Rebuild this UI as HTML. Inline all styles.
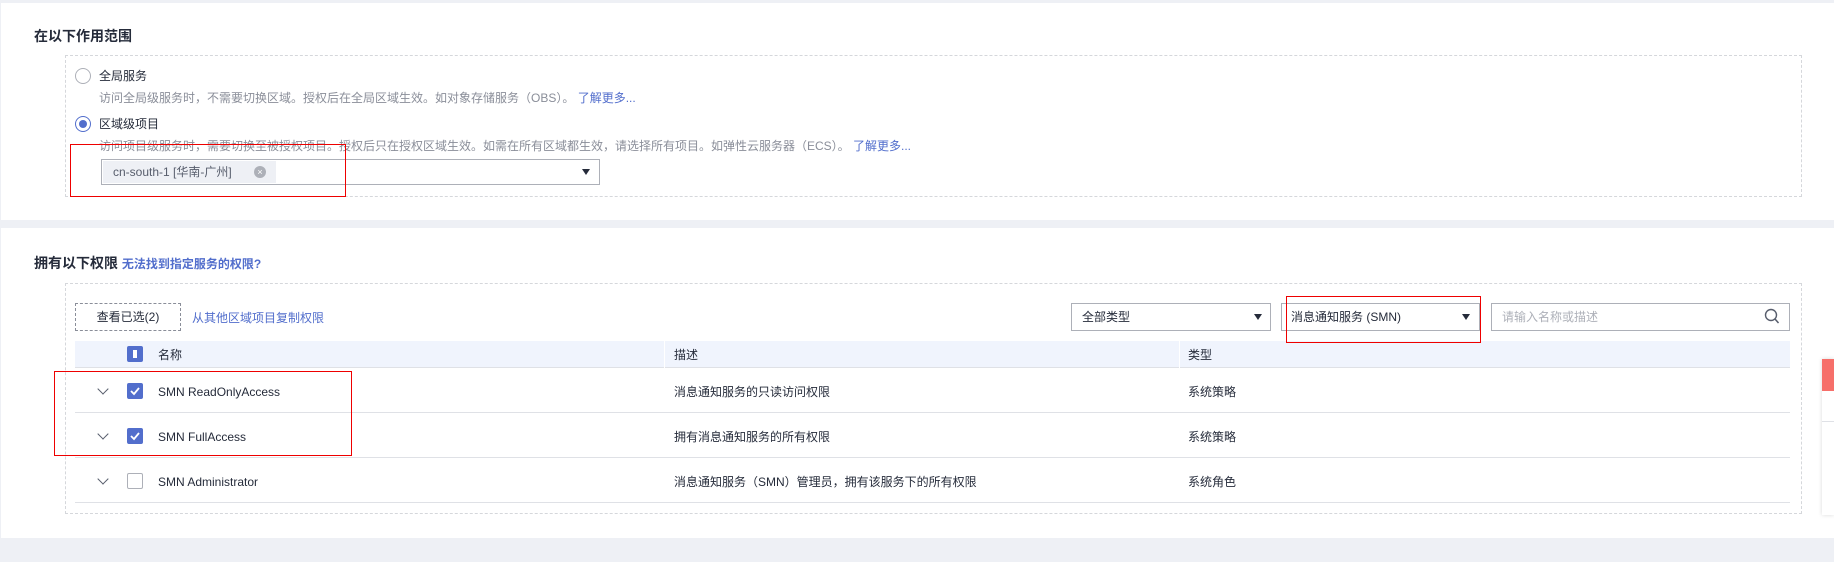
<!DOCTYPE html>
<html><head><meta charset="utf-8"><style>
*{box-sizing:border-box;margin:0;padding:0}
body{width:1834px;height:562px;background:#eef0f5;position:relative;overflow:hidden;font-family:"Liberation Sans","Noto Sans CJK SC",sans-serif;font-size:12px;color:#252b3a}
.a{position:absolute}
.card{position:absolute;left:1px;right:0;background:#fff}
.dash{position:absolute;border:1px dashed #d5d7db}
.t{position:absolute;white-space:nowrap;line-height:16px}
.radio{position:absolute;width:16px;height:16px;border:1px solid #adb0b8;border-radius:50%;background:#fff}
.sel{position:absolute;border:1px solid #adb0b8;background:#fff}
.tri{position:absolute;width:0;height:0;border-left:4px solid transparent;border-right:4px solid transparent;border-top:6px solid #252b3a}
.red{position:absolute;border:1px solid #e00;z-index:10}
.cb{position:absolute;width:16px;height:16px;border-radius:2px}
.row{position:absolute;left:75px;width:1715px;height:45px;border-bottom:1px solid #dfe1e6}
.chev{position:absolute;width:8px;height:8px;border-right:1.5px solid #575d6c;border-bottom:1.5px solid #575d6c;transform:rotate(45deg)}
</style></head><body>
<div class="card" style="top:3px;height:217px"></div>
<div class="t" style="left:34px;top:28px;font-size:14px;font-weight:bold">在以下作用范围</div>
<div class="dash" style="left:65px;top:55px;width:1737px;height:142px"></div>
<div class="radio" style="left:75px;top:68px"></div>
<div class="t" style="left:99px;top:68px">全局服务</div>
<div class="t" style="left:99px;top:90px;color:#8a8e99">访问全局级服务时，不需要切换区域。授权后在全局区域生效。如对象存储服务（OBS）。 <span style="color:#526ecc">了解更多...</span></div>
<div class="radio" style="left:75px;top:116px;border-color:#526ecc"><div class="a" style="left:3px;top:3px;width:8px;height:8px;border-radius:50%;background:#526ecc"></div></div>
<div class="t" style="left:99px;top:116px">区域级项目</div>
<div class="t" style="left:99px;top:138px;color:#8a8e99">访问项目级服务时，需要切换至被授权项目。授权后只在授权区域生效。如需在所有区域都生效，请选择所有项目。如弹性云服务器（ECS）。 <span style="color:#526ecc">了解更多...</span></div>
<div class="sel" style="left:101px;top:159px;width:499px;height:26px"></div>
<div class="a" style="left:103px;top:161px;width:173px;height:22px;background:#eef0f5"></div>
<div class="t" style="left:113px;top:164px;color:#575d6c">cn-south-1 [华南-广州]</div>
<div class="a" style="left:254px;top:166px;width:12px;height:12px;border-radius:50%;background:#adb0b8;color:#fff;font-size:9px;line-height:12px;text-align:center">×</div>
<div class="tri" style="left:582px;top:169px"></div>
<div class="red" style="left:70px;top:144px;width:276px;height:53px"></div>

<div class="card" style="top:228px;height:310px"></div>
<div class="t" style="left:34px;top:255px;font-size:14px;font-weight:bold">拥有以下权限 <span style="color:#526ecc;font-size:12px">无法找到指定服务的权限?</span></div>
<div class="dash" style="left:65px;top:283px;width:1737px;height:231px"></div>
<div class="a" style="left:75px;top:303px;width:106px;height:28px;border:1px dashed #8a8e99;text-align:center;line-height:26px">查看已选(2)</div>
<div class="t" style="left:192px;top:310px;color:#526ecc">从其他区域项目复制权限</div>
<div class="sel" style="left:1071px;top:303px;width:200px;height:28px"></div>
<div class="t" style="left:1082px;top:309px">全部类型</div>
<div class="tri" style="left:1254px;top:314px"></div>
<div class="sel" style="left:1281px;top:303px;width:199px;height:28px"></div>
<div class="t" style="left:1291px;top:309px">消息通知服务 (SMN)</div>
<div class="tri" style="left:1462px;top:314px"></div>
<div class="red" style="left:1286px;top:296px;width:195px;height:47px"></div>
<div class="sel" style="left:1491px;top:303px;width:299px;height:28px"></div>
<div class="t" style="left:1502px;top:309px;color:#adb0b8">请输入名称或描述</div>
<svg class="a" style="left:1764px;top:308px" width="16" height="18" viewBox="0 0 16 18"><circle cx="7" cy="7" r="5.5" fill="none" stroke="#575d6c" stroke-width="1.4"/><path d="M11 11l3.5 4" stroke="#575d6c" stroke-width="1.5"/></svg>

<div class="a" style="left:75px;top:341px;width:1715px;height:27px;background:#f0f4fd;border-bottom:1px solid #dfe1e6"></div>
<div class="a" style="left:664px;top:341px;width:1px;height:27px;background:#fff"></div>
<div class="a" style="left:1179px;top:341px;width:1px;height:27px;background:#fff"></div>
<div class="cb" style="left:127px;top:346px;background:#526ecc"><div class="a" style="left:6px;top:4px;width:4px;height:8px;background:#fff"></div></div>
<div class="t" style="left:158px;top:347px">名称</div>
<div class="t" style="left:674px;top:347px">描述</div>
<div class="t" style="left:1188px;top:347px">类型</div>

<div class="row" style="top:368px"></div>
<div class="row" style="top:413px"></div>
<div class="row" style="top:458px"></div>

<div class="chev" style="left:99px;top:385px"></div>
<div class="cb" style="left:127px;top:383px;background:#526ecc"><svg width="16" height="16"><path d="M4 8l3 3 5-6" stroke="#fff" stroke-width="1.8" fill="none"/></svg></div>
<div class="t" style="left:158px;top:384px">SMN ReadOnlyAccess</div>
<div class="t" style="left:674px;top:384px">消息通知服务的只读访问权限</div>
<div class="t" style="left:1188px;top:384px">系统策略</div>

<div class="chev" style="left:99px;top:430px"></div>
<div class="cb" style="left:127px;top:428px;background:#526ecc"><svg width="16" height="16"><path d="M4 8l3 3 5-6" stroke="#fff" stroke-width="1.8" fill="none"/></svg></div>
<div class="t" style="left:158px;top:429px">SMN FullAccess</div>
<div class="t" style="left:674px;top:429px">拥有消息通知服务的所有权限</div>
<div class="t" style="left:1188px;top:429px">系统策略</div>

<div class="chev" style="left:99px;top:475px"></div>
<div class="cb" style="left:127px;top:473px;border:1px solid #adb0b8"></div>
<div class="t" style="left:158px;top:474px">SMN Administrator</div>
<div class="t" style="left:674px;top:474px">消息通知服务（SMN）管理员，拥有该服务下的所有权限</div>
<div class="t" style="left:1188px;top:474px">系统角色</div>

<div class="red" style="left:54px;top:371px;width:298px;height:85px"></div>

<div class="a" style="left:1822px;top:359px;width:12px;height:156px;background:#fff;box-shadow:0 0 4px rgba(0,0,0,.15)"></div>
<div class="a" style="left:1822px;top:359px;width:12px;height:32px;background:#f66f6a"></div>
<div class="a" style="left:1822px;top:421px;width:12px;height:1px;background:#dfe1e6"></div>
</body></html>
